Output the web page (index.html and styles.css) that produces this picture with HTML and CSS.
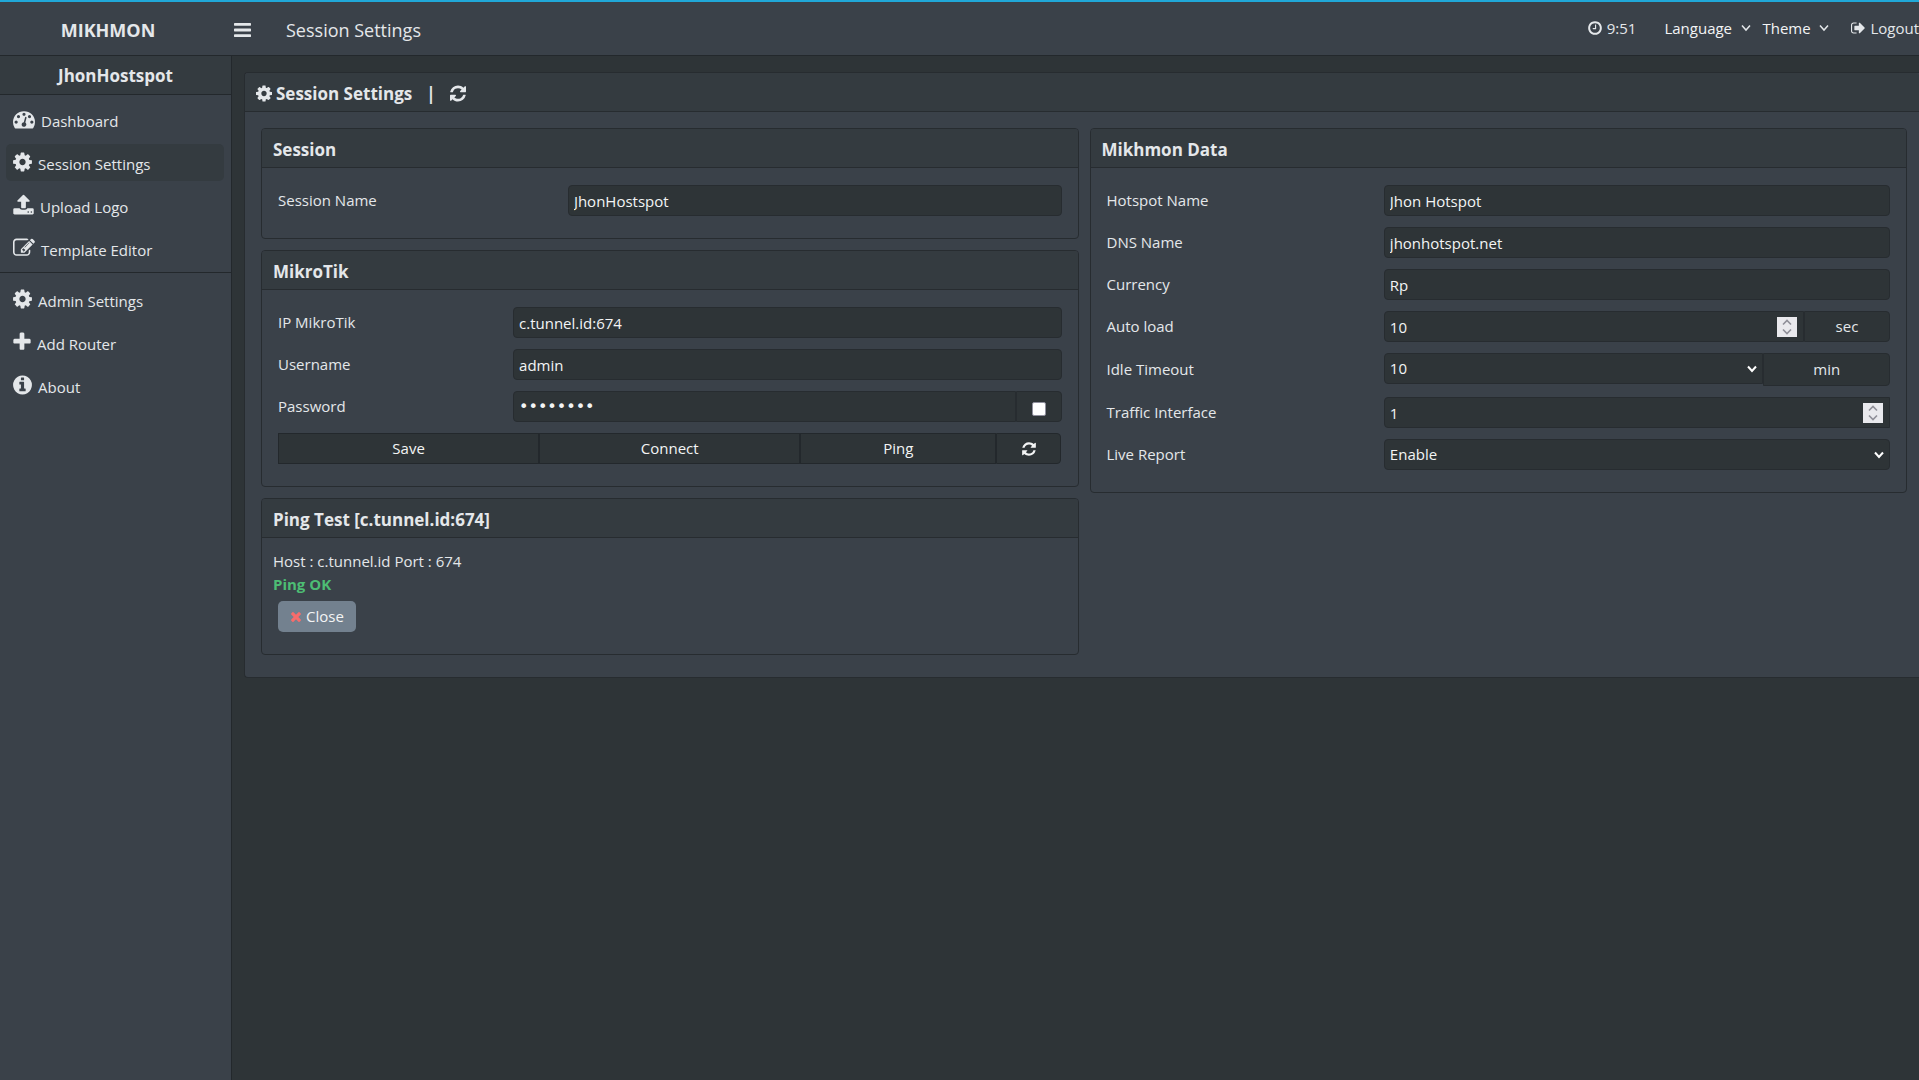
FILE: index.html
```html
<!DOCTYPE html>
<html lang="en">
<head>
    <meta charset="UTF-8">
    <meta name="viewport" content="width=device-width, initial-scale=1.0">
    <title>MIKHMON - Session Settings</title>
    <link rel="stylesheet" href="styles.css">
</head>
<body>
    <!-- icon set -->
    <svg class="icon-set" aria-hidden="true">
        <symbol id="bars" viewBox="128 0 1536 1792"><path d="M1664 1344v128q0 26-19 45t-45 19h-1408q-26 0-45-19t-19-45v-128q0-26 19-45t45-19h1408q26 0 45 19t19 45zm0-512v128q0 26-19 45t-45 19h-1408q-26 0-45-19t-19-45v-128q0-26 19-45t45-19h1408q26 0 45 19t19 45zm0-512v128q0 26-19 45t-45 19h-1408q-26 0-45-19t-19-45v-128q0-26 19-45t45-19h1408q26 0 45 19t19 45z"/></symbol>
        <symbol id="cog" viewBox="128 0 1536 1792"><path d="M1152 896q0-106-75-181t-181-75-181 75-75 181 75 181 181 75 181-75 75-181zm512-109v222q0 12-8 23t-20 13l-185 28q-19 54-39 91 35 50 107 138 10 12 10 25t-9 23q-27 37-99 108t-94 71q-12 0-26-9l-138-108q-44 23-91 38-16 136-29 186-7 28-36 28h-222q-14 0-24.5-8.5t-11.5-21.5l-28-184q-49-16-90-37l-141 107q-10 9-25 9-14 0-25-11-126-114-165-168-7-10-7-23 0-12 8-23 15-21 51-66.5t54-70.5q-27-50-41-99l-183-27q-13-2-21-12.5t-8-23.5v-222q0-12 8-23t19-13l186-28q14-46 39-92-40-57-107-138-10-12-10-24 0-10 9-23 26-36 98.5-107.5t94.5-71.5q13 0 26 10l138 107q44-23 91-38 16-136 29-186 7-28 36-28h222q14 0 24.5 8.5t11.5 21.5l28 184q49 16 90 37l142-107q9-9 24-9 13 0 25 10 129 119 165 170 7 8 7 22 0 12-8 23-15 21-51 66.5t-54 70.5q26 50 41 98l183 28q13 2 21 12.5t8 23.5z"/></symbol>
        <symbol id="refresh" viewBox="128 0 1536 1792"><path d="M1639 1056q0 5-1 7-64 268-268 434.5t-478 166.5q-146 0-282.5-55t-243.5-157l-129 129q-19 19-45 19t-45-19-19-45v-448q0-26 19-45t45-19h448q26 0 45 19t19 45-19 45l-137 137q71 66 161 102t187 36q134 0 250-65t186-179q11-17 53-117 8-23 30-23h192q13 0 22.5 9.5t9.5 22.5zm25-800v448q0 26-19 45t-45 19h-448q-26 0-45-19t-19-45 19-45l138-138q-148-137-349-137-134 0-250 65t-186 179q-11 17-53 117-8 23-30 23h-199q-13 0-22.5-9.5t-9.5-22.5v-7q65-268 270-434.5t480-166.5q146 0 284 55.5t245 156.5l130-129q19-19 45-19t45 19 19 45z"/></symbol>
        <symbol id="plus" viewBox="192 0 1408 1792"><path d="M1600 736v192q0 40-28 68t-68 28h-416v416q0 40-28 68t-68 28h-192q-40 0-68-28t-28-68v-416h-416q-40 0-68-28t-28-68v-192q0-40 28-68t68-28h416v-416q0-40 28-68t68-28h192q40 0 68 28t28 68v416h416q40 0 68 28t28 68z"/></symbol>
        <symbol id="info" viewBox="128 0 1536 1792"><path d="M1152 1376v-160q0-14-9-23t-23-9h-96v-512q0-14-9-23t-23-9h-320q-14 0-23 9t-9 23v160q0 14 9 23t23 9h96v320h-96q-14 0-23 9t-9 23v160q0 14 9 23t23 9h448q14 0 23-9t9-23zm-128-896v-160q0-14-9-23t-23-9h-192q-14 0-23 9t-9 23v160q0 14 9 23t23 9h192q14 0 23-9t9-23zm640 416q0 209-103 385.5t-279.5 279.5-385.5 103-385.5-103-279.5-279.5-103-385.5 103-385.5 279.5-279.5 385.5-103 385.5 103 279.5 279.5 103 385.5z"/></symbol>
        <symbol id="upload" viewBox="64 0 1664 1792"><path d="M1344 1472q0-26-19-45t-45-19-45 19-19 45 19 45 45 19 45-19 19-45zm256 0q0-26-19-45t-45-19-45 19-19 45 19 45 45 19 45-19 19-45zm128-224v320q0 40-28 68t-68 28h-1472q-40 0-68-28t-28-68v-320q0-40 28-68t68-28h427q21 56 70.5 92t110.5 36h256q61 0 110.5-36t70.5-92h427q40 0 68 28t28 68zm-325-648q-17 40-59 40h-256v448q0 26-19 45t-45 19h-256q-26 0-45-19t-19-45v-448h-256q-42 0-59-40-17-39 14-69l448-448q18-19 45-19t45 19l448 448q31 30 14 69z"/></symbol>
        <symbol id="edit" viewBox="0 0 1792 1792"><path d="M888 1184l116-116-152-152-116 116v56h96v96h56zm440-720q-16-16-33 1l-350 350q-17 17-1 33t33-1l350-350q17-17 1-33zm80 594v190q0 119-84.5 203.5t-203.5 84.5h-832q-119 0-203.5-84.5t-84.5-203.5v-832q0-119 84.5-203.5t203.5-84.5h832q63 0 117 25 15 7 18 23 3 17-9 29l-49 49q-14 14-32 8-23-6-45-6h-832q-66 0-113 47t-47 113v832q0 66 47 113t113 47h832q66 0 113-47t47-113v-126q0-13 9-22l64-64q15-15 35-7t20 29zm-96-738l288 288-672 672h-288v-288zm444 132l-92 92-288-288 92-92q28-28 68-28t68 28l152 152q28 28 28 68t-28 68z"/></symbol>
        <symbol id="dashboard" viewBox="0 0 1792 1792"><path d="M384 1152q0-53-37.5-90.5t-90.5-37.5-90.5 37.5-37.5 90.5 37.5 90.5 90.5 37.5 90.5-37.5 37.5-90.5zm192-448q0-53-37.5-90.5t-90.5-37.5-90.5 37.5-37.5 90.5 37.5 90.5 90.5 37.5 90.5-37.5 37.5-90.5zm428 481l101-382q6-26-7.5-48.5t-38.5-29.5-48 6.5-30 39.5l-101 382q-60 5-107 43.5t-63 98.5q-20 77 20 146t117 89 146-20 89-117q16-60-6-117t-72-91zm660-33q0-53-37.5-90.5t-90.5-37.5-90.5 37.5-37.5 90.5 37.5 90.5 90.5 37.5 90.5-37.5 37.5-90.5zm-640-640q0-53-37.5-90.5t-90.5-37.5-90.5 37.5-37.5 90.5 37.5 90.5 90.5 37.5 90.5-37.5 37.5-90.5zm448 192q0-53-37.5-90.5t-90.5-37.5-90.5 37.5-37.5 90.5 37.5 90.5 90.5 37.5 90.5-37.5 37.5-90.5zm320 448q0 261-141 483-19 29-54 29h-1402q-35 0-54-29-141-221-141-483 0-182 71-348t191-286 286-191 348-71 348 71 286 191 191 286 71 348z"/></symbol>
        <symbol id="clock" viewBox="128 0 1536 1792"><path d="M1024 544v448q0 14-9 23t-23 9h-320q-14 0-23-9t-9-23v-64q0-14 9-23t23-9h224v-352q0-14 9-23t23-9h64q14 0 23 9t9 23zm416 352q0-148-73-273t-198-198-273-73-273 73-198 198-73 273 73 273 198 198 273 73 273-73 198-198 73-273zm224 0q0 209-103 385.5t-279.5 279.5-385.5 103-385.5-103-279.5-279.5-103-385.5 103-385.5 279.5-279.5 385.5-103 385.5 103 279.5 279.5 103 385.5z"/></symbol>
        <symbol id="signout" viewBox="64 0 1600 1792"><path d="M704 1440q0 4 1 20t.5 26.5-3 23.5-10 19.5-20.5 6.5h-320q-119 0-203.5-84.5t-84.5-203.5v-704q0-119 84.5-203.5t203.5-84.5h320q13 0 22.5 9.5t9.5 22.5q0 4 1 20t.5 26.5-3 23.5-10 19.5-20.5 6.5h-320q-66 0-113 47t-47 113v704q0 66 47 113t113 47h312l11.5 1 11.5 3 8 5.5 7 9 2 13.5zm928-544q0 26-19 45l-544 544q-19 19-45 19t-45-19-19-45v-288h-448q-26 0-45-19t-19-45v-384q0-26 19-45t45-19h448v-288q0-26 19-45t45-19 45 19l544 544q19 19 19 45z"/></symbol>
        <symbol id="times" viewBox="192 0 1408 1792"><path d="M1490 1322q0 40-28 68l-136 136q-28 28-68 28t-68-28l-294-294-294 294q-28 28-68 28t-68-28l-136-136q-28-28-28-68t28-68l294-294-294-294q-28-28-28-68t28-68l136-136q28-28 68-28t68 28l294 294 294-294q28-28 68-28t68 28l136 136q28 28 28 68t-28 68l-294 294 294 294q28 28 28 68z"/></symbol>
        <symbol id="arrows" viewBox="0 0 20 20"><path d="M6 7.500l4-4 4 4M6 12.500l4 4 4-4" fill="none" stroke="#8f8f98" stroke-width="1.600"/></symbol>
    </svg>

    <header class="topbar">
        <a class="brand" href="#">MIKHMON</a>
        <button type="button" class="menu-btn" aria-label="Menu"><svg class="icon"><use href="#bars"/></svg></button>
        <span class="page-name">Session Settings</span>
        <div class="top-right">
            <span class="timer"><svg class="icon"><use href="#clock"/></svg>9:51</span>
            <select class="top-select language" aria-label="Language"><option>Language</option></select>
            <select class="top-select theme" aria-label="Theme"><option>Theme</option></select>
            <a class="logout" href="#"><svg class="icon"><use href="#signout"/></svg>Logout</a>
        </div>
    </header>

    <div class="wrapper">
        <nav class="sidenav">
            <div class="session-title">JhonHostspot</div>
            <div class="menu">
                <a href="#"><svg class="icon wide"><use href="#dashboard"/></svg>Dashboard</a>
                <a href="#" class="active"><svg class="icon"><use href="#cog"/></svg>Session Settings</a>
                <a href="#"><svg class="icon mid"><use href="#upload"/></svg>Upload Logo</a>
                <a href="#"><svg class="icon wide"><use href="#edit"/></svg>Template Editor</a>
            </div>
            <div class="menu">
                <a href="#"><svg class="icon"><use href="#cog"/></svg>Admin Settings</a>
                <a href="#"><svg class="icon narrow"><use href="#plus"/></svg>Add Router</a>
                <a href="#"><svg class="icon"><use href="#info"/></svg>About</a>
            </div>
        </nav>

        <main class="main">
            <section class="card outer">
                <h3 class="card-header">
                    <svg class="icon"><use href="#cog"/></svg>Session Settings
                    <span class="bar">|</span>
                    <a href="#" aria-label="Reload"><svg class="icon"><use href="#refresh"/></svg></a>
                </h3>
                <form class="columns">
                    <div class="column">
                        <section class="card">
                            <h3 class="card-header">Session</h3>
                            <div class="card-body session">
                                <div class="row">
                                    <label for="sessname">Session Name</label>
                                    <div class="group"><input class="field" type="text" id="sessname" value="JhonHostspot"></div>
                                </div>
                            </div>
                        </section>

                        <section class="card">
                            <h3 class="card-header">MikroTik</h3>
                            <div class="card-body mikrotik">
                                <div class="row">
                                    <label for="ipmik">IP MikroTik</label>
                                    <div class="group"><input class="field" type="text" id="ipmik" value="c.tunnel.id:674"></div>
                                </div>
                                <div class="row">
                                    <label for="usermik">Username</label>
                                    <div class="group"><input class="field" type="text" id="usermik" value="admin"></div>
                                </div>
                                <div class="row">
                                    <label for="passmik">Password</label>
                                    <div class="group">
                                        <input class="field password" type="password" id="passmik" value="mikrotik">
                                        <span class="addon show-pass"><input type="checkbox" aria-label="Show password"></span>
                                    </div>
                                </div>
                                <div class="actions">
                                    <button type="button">Save</button>
                                    <button type="button">Connect</button>
                                    <button type="button">Ping</button>
                                    <button type="button" aria-label="Reload"><svg class="icon"><use href="#refresh"/></svg></button>
                                </div>
                            </div>
                        </section>

                        <section class="card">
                            <h3 class="card-header">Ping Test [c.tunnel.id:674]</h3>
                            <div class="ping">
                                <div>Host : c.tunnel.id Port : 674</div>
                                <b class="ok">Ping OK</b>
                                <button type="button" class="close"><svg class="icon"><use href="#times"/></svg>Close</button>
                            </div>
                        </section>
                    </div>

                    <div class="column">
                        <section class="card">
                            <h3 class="card-header">Mikhmon Data</h3>
                            <div class="card-body data">
                                <div class="row">
                                    <label for="hotspotname">Hotspot Name</label>
                                    <div class="group"><input class="field" type="text" id="hotspotname" value="Jhon Hotspot"></div>
                                </div>
                                <div class="row">
                                    <label for="dnsname">DNS Name</label>
                                    <div class="group"><input class="field" type="text" id="dnsname" value="jhonhotspot.net"></div>
                                </div>
                                <div class="row">
                                    <label for="currency">Currency</label>
                                    <div class="group"><input class="field" type="text" id="currency" value="Rp"></div>
                                </div>
                                <div class="row">
                                    <label for="areload">Auto load</label>
                                    <div class="group">
                                        <div class="number">
                                            <input class="field" type="number" id="areload" value="10">
                                            <svg class="spinner"><use href="#arrows"/></svg>
                                        </div>
                                        <span class="addon sec">sec</span>
                                    </div>
                                </div>
                                <div class="row">
                                    <label for="idleto">Idle Timeout</label>
                                    <div class="group">
                                        <select class="field" id="idleto"><option>10</option></select>
                                        <span class="addon min">min</span>
                                    </div>
                                </div>
                                <div class="row">
                                    <label for="iface">Traffic Interface</label>
                                    <div class="group">
                                        <div class="number">
                                            <input class="field" type="number" id="iface" value="1">
                                            <svg class="spinner"><use href="#arrows"/></svg>
                                        </div>
                                    </div>
                                </div>
                                <div class="row">
                                    <label for="livereport">Live Report</label>
                                    <div class="group"><select class="field" id="livereport"><option>Enable</option></select></div>
                                </div>
                            </div>
                        </section>
                    </div>
                </form>
            </section>
        </main>
    </div>
</body>
</html>
```
FILE: styles.css
```css
* {
    box-sizing: border-box;
}
body {
    margin: 0;
    min-height: 100vh;
    display: flex;
    flex-direction: column;
    font-family: "Open Sans", "Noto Sans", sans-serif;
    font-size: 15px;
    line-height: 23px;
    color: #e4e7ea;
    background-color: #2e3437;
    overflow-x: hidden;
}
a {
    color: inherit;
    text-decoration: none;
}
button, input, select {
    font: inherit;
    color: #f3f4f5;
}
.icon-set {
    display: none;
}
.icon {
    flex: none;
    fill: currentColor;
}

/* top bar */
.topbar {
    display: flex;
    align-items: center;
    height: 56px;
    padding-top: 3px;
    border-top: 2px solid #20a8d8;
    border-bottom: 1px solid #23282c;
    background-color: #3a4149;
}
.brand {
    width: 216px;
    text-align: center;
    font-size: 18px;
    font-weight: bold;
}
.menu-btn {
    display: flex;
    width: 52px;
    padding: 0 0 0 18px;
    border: none;
    background: none;
    color: #e4e7ea;
}
.menu-btn .icon {
    width: 17px;
    height: 20px;
}
.page-name {
    margin-left: 18px;
    font-size: 18px;
}
.top-right {
    display: flex;
    align-items: center;
    margin-left: auto;
    padding-bottom: 4px;
}
.timer, .logout {
    display: flex;
    align-items: center;
    gap: 5px;
}
.timer {
    margin-right: 23px;
}
.timer .icon, .logout .icon {
    width: 14px;
    height: 16px;
}
.logout {
    margin-left: 16px;
}
.top-select {
    appearance: none;
    border: none;
    padding: 0 5px;
    background: url("data:image/svg+xml,%3Csvg xmlns='http://www.w3.org/2000/svg' width='10' height='8'%3E%3Cpath d='M1 1.500l4 4.500 4-4.500' fill='none' stroke='%23e4e7ea' stroke-width='1.500'/%3E%3C/svg%3E") no-repeat right 6px center;
}
.language {
    width: 98px;
}
.theme {
    width: 78px;
}

/* side menu */
.wrapper {
    display: flex;
    flex: 1;
}
.sidenav {
    flex: none;
    width: 232px;
    border-right: 1px solid #23282c;
    background-color: #3a4149;
}
.session-title {
    height: 39px;
    line-height: 40px;
    border-bottom: 1px solid #23282c;
    background-color: #343b40;
    text-align: center;
    font-size: 17px;
    font-weight: bold;
}
.menu {
    display: flex;
    flex-direction: column;
    gap: 6px;
    padding: 6px 7px 5px 6px;
}
.menu + .menu {
    padding-top: 8px;
    border-top: 1px solid #23282c;
}
.menu a {
    display: flex;
    align-items: center;
    gap: 6px;
    height: 37px;
    padding: 3px 7px 0;
    border-radius: 5px;
}
.menu .active {
    background-color: #343b40;
}
.menu .icon {
    width: 19px;
    height: 22px;
    margin-bottom: 4px;
}
.menu .wide {
    width: 22px;
}
.menu .mid {
    width: 21px;
}
.menu .narrow {
    width: 18px;
}

/* cards */
.main {
    flex: 1;
    padding: 16px 0 0 12px;
}
.card {
    border: 1px solid #272c30;
    border-radius: 4px;
    background-color: #3a4149;
}
.outer {
    border-right: none;
    border-radius: 4px 0 0 4px;
}
.card-header {
    display: flex;
    align-items: center;
    margin: 0;
    height: 39px;
    padding: 2px 11px 0;
    border-bottom: 1px solid #272c30;
    border-radius: 3px 3px 0 0;
    background-color: #343b40;
    font-size: 17px;
    font-weight: bold;
}
.card-header a {
    display: flex;
}
.card-header .icon {
    width: 16px;
    height: 19px;
    margin-right: 4px;
}
.bar {
    margin: 0 14px;
}
.columns {
    display: flex;
    gap: 11px;
    padding: 16px 12px 22px 16px;
}
.column {
    flex: 1;
    display: flex;
    flex-direction: column;
    gap: 11px;
}
.card-body {
    display: flex;
    flex-direction: column;
    gap: 11px;
    padding: 17px 16px 22px;
}
.row {
    display: flex;
    align-items: center;
}
.group {
    flex: 1;
    display: flex;
    align-items: flex-start;
}
.session label {
    width: 37%;
}
.mikrotik label {
    width: 30%;
}
.data label {
    width: 35.4%;
}

/* form controls */
.field, .addon {
    height: 31px;
    border: 1px solid #272c30;
    border-radius: 4px;
    background-color: #2e3437;
}
.field {
    flex: 1;
    width: 100%;
    min-width: 0;
    padding: 0 5px;
}
.password {
    font-family: "DejaVu Sans", sans-serif;
    font-size: 16px;
}
select.field {
    appearance: none;
    background: #2e3437 url("data:image/svg+xml,%3Csvg xmlns='http://www.w3.org/2000/svg' width='10' height='8'%3E%3Cpath d='M1 1.500l4 4.500 4-4.500' fill='none' stroke='white' stroke-width='2'/%3E%3C/svg%3E") no-repeat right 5px center;
}
.group :not(:last-child).field, .number:not(:last-child) .field {
    border-radius: 4px 0 0 4px;
}
.addon {
    display: flex;
    align-items: center;
    justify-content: center;
    border-radius: 0 4px 4px 0;
}
.show-pass {
    width: 46px;
}
.show-pass input {
    appearance: none;
    width: 14px;
    height: 14px;
    margin: 4px 0 0;
    border: 1px solid #8f8f9d;
    border-radius: 2px;
    background-color: #fff;
}
.sec {
    width: 17%;
}
.min {
    width: 25%;
    height: 33px;
}
.number {
    position: relative;
    flex: 1;
    display: flex;
}
.number .field {
    appearance: textfield;
}
.spinner {
    position: absolute;
    right: 7px;
    top: 6px;
    width: 20px;
    height: 20px;
    background-color: #e9e9ed;
}
.actions {
    display: grid;
    grid-template-columns: 4fr 4fr 3fr 1fr;
}
.actions button {
    display: flex;
    align-items: center;
    justify-content: center;
    height: 31px;
    padding: 0;
    border: 1px solid #23282c;
    background-color: #2e3437;
}
.actions button:last-child {
    border-radius: 0 4px 4px 0;
}
.actions .icon {
    width: 14px;
    height: 16px;
}

/* ping result */
.ping {
    padding: 12px 11px 22px;
}
.ok {
    display: block;
    color: #4dbd74;
}
.close {
    display: flex;
    align-items: center;
    gap: 4px;
    height: 31px;
    margin: 5px 5px 0;
    padding: 0 12px;
    border: none;
    border-radius: 5px;
    background-color: #73818f;
}
.close .icon {
    width: 12px;
    height: 15px;
    color: #f86c6b;
}
```
